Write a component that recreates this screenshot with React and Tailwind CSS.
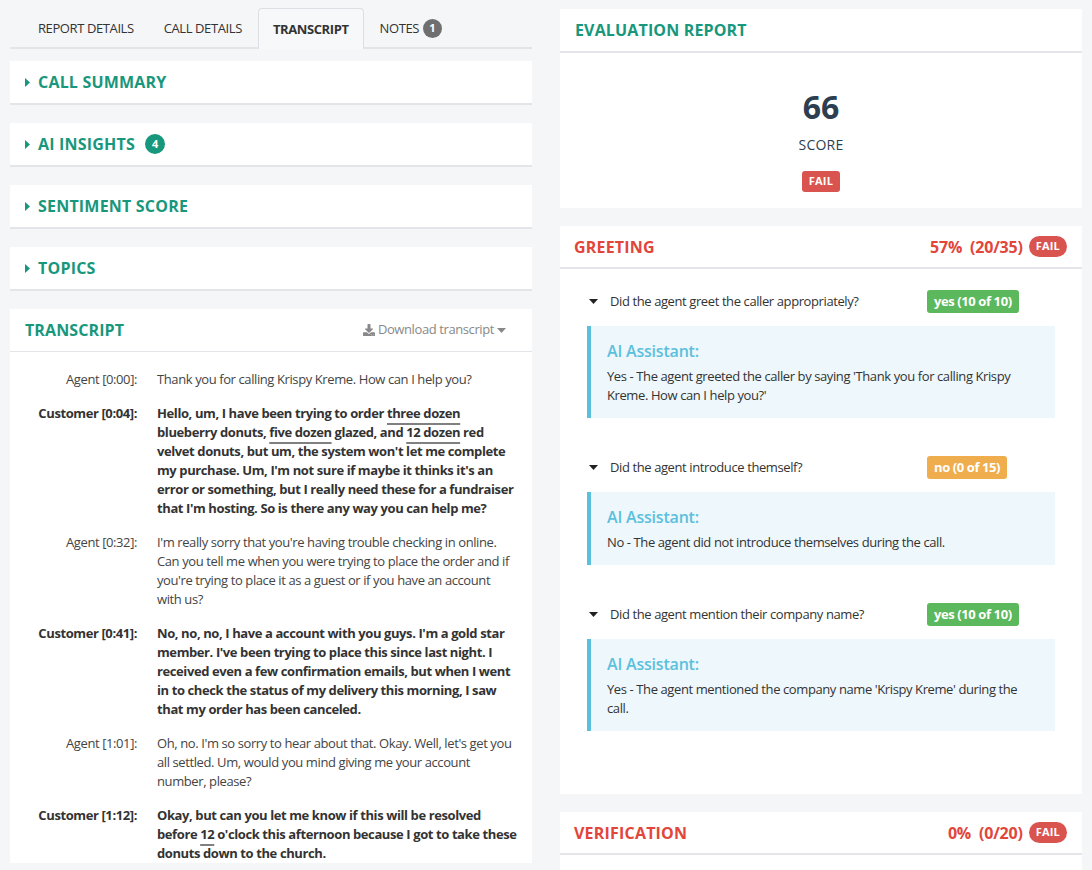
import { FaDownload } from "react-icons/fa";

const teal = "text-[#17977c]";

function CaretRight() {
  return (
    <svg width="5" height="9" viewBox="0 0 5 9" className="shrink-0">
      <path d="M0 0 L5 4.5 L0 9 Z" fill="#17977c" />
    </svg>
  );
}

function CaretDown({ color = "#222" }) {
  return (
    <svg width="9" height="5" viewBox="0 0 9 5" className="shrink-0">
      <path d="M0 0 L9 0 L4.5 5 Z" fill={color} />
    </svg>
  );
}

function Collapsed({ title, badge }) {
  return (
    <div className="bg-white border-b-2 border-[#e3e5e9] h-[44px] flex items-center pl-[15px] gap-[8px]">
      <CaretRight />
      <span className={`${teal} text-[16px] font-bold tracking-[0.2px]`}>{title}</span>
      {badge && (
        <span className="ml-[2px] w-[20px] h-[20px] rounded-full bg-[#17977c] text-white text-[11px] font-bold flex items-center justify-center">
          {badge}
        </span>
      )}
    </div>
  );
}

function U({ children }) {
  return <span className="underline decoration-2 decoration-[#808080] underline-offset-[5px]">{children}</span>;
}

const transcript = [
  { who: "Agent [0:00]:", text: "Thank you for calling Krispy Kreme. How can I help you?" },
  {
    who: "Customer [0:04]:",
    bold: true,
    text: (
      <>
        Hello, um, I have been trying to order <U>three dozen</U> blueberry donuts, <U>five dozen</U> glazed, and{" "}
        <U>12 dozen</U> red velvet donuts, but um, the system won't let me complete my purchase. Um, I'm not sure if
        maybe it thinks it's an error or something, but I really need these for a fundraiser that I'm hosting. So is
        there any way you can help me?
      </>
    ),
  },
  {
    who: "Agent [0:32]:",
    text: "I'm really sorry that you're having trouble checking in online. Can you tell me when you were trying to place the order and if you're trying to place it as a guest or if you have an account with us?",
  },
  {
    who: "Customer [0:41]:",
    bold: true,
    text: "No, no, no, I have a account with you guys. I'm a gold star member. I've been trying to place this since last night. I received even a few confirmation emails, but when I went in to check the status of my delivery this morning, I saw that my order has been canceled.",
  },
  {
    who: "Agent [1:01]:",
    text: "Oh, no. I'm so sorry to hear about that. Okay. Well, let's get you all settled. Um, would you mind giving me your account number, please?",
  },
  {
    who: "Customer [1:12]:",
    bold: true,
    text: (
      <>
        Okay, but can you let me know if this will be resolved before <U>12</U> o'clock this afternoon because I got to
        take these donuts down to the church.
      </>
    ),
  },
];

function FailPill() {
  return (
    <span className="bg-[#d9534f] text-white text-[11px] font-bold rounded-full h-[21px] px-[7px] flex items-center tracking-[0.2px]">
      FAIL
    </span>
  );
}

function SectionHeader({ title, score }) {
  return (
    <div className="h-[43px] border-b-2 border-[#e3e5e9] flex items-center justify-between pl-[14px] pr-[15px]">
      <span className="text-[#e2453a] text-[16px] font-bold tracking-[0.2px]">{title}</span>
      <div className="flex items-center gap-[6px]">
        <span className="text-[#e2453a] text-[16px] font-bold whitespace-pre tracking-[-0.2px]">{score}</span>
        <FailPill />
      </div>
    </div>
  );
}

const questions = [
  {
    q: "Did the agent greet the caller appropriately?",
    badge: "yes (10 of 10)",
    color: "bg-[#5cb85c]",
    ans: "Yes - The agent greeted the caller by saying 'Thank you for calling Krispy Kreme. How can I help you?'",
  },
  {
    q: "Did the agent introduce themself?",
    badge: "no (0 of 15)",
    color: "bg-[#f0ad4e]",
    ans: "No - The agent did not introduce themselves during the call.",
  },
  {
    q: "Did the agent mention their company name?",
    badge: "yes (10 of 10)",
    color: "bg-[#5cb85c]",
    ans: "Yes - The agent mentioned the company name 'Krispy Kreme' during the call.",
  },
];

export default function App() {
  return (
    <main className="bg-[#f5f6f8] w-[1092px] h-[870px] overflow-hidden flex gap-[28px] px-[10px] font-['Open_Sans',sans-serif] text-[#333] tracking-[-0.4px]">
      {/* left column */}
      <div className="w-[522px] flex flex-col">
        {/* tabs */}
        <div className="flex items-end gap-[2px] pl-[14px] pt-[8px] border-b-2 border-[#e3e5e9] text-[13px]">
          <div className="h-[39px] pt-[2px] px-[14px] flex items-center">REPORT DETAILS</div>
          <div className="h-[39px] pt-[2px] px-[14px] flex items-center">CALL DETAILS</div>
          <div className="h-[41px] pt-[2px] -mb-[2px] px-[14px] flex items-center font-bold border border-b-0 border-[#dcdfe3] rounded-t-[4px] bg-[#f7f8fa]">
            TRANSCRIPT
          </div>
          <div className="h-[39px] pt-[2px] px-[14px] flex items-center gap-[4px]">
            NOTES
            <span className="w-[19px] h-[19px] rounded-full bg-[#6f6f6f] text-white text-[11px] font-bold flex items-center justify-center tracking-normal">
              1
            </span>
          </div>
        </div>

        <div className="flex flex-col gap-[18px] mt-[12px]">
          <Collapsed title="CALL SUMMARY" />
          <Collapsed title="AI INSIGHTS" badge="4" />
          <Collapsed title="SENTIMENT SCORE" />
          <Collapsed title="TOPICS" />

          {/* transcript */}
          <div className="bg-white">
            <div className="h-[43px] border-b border-[#e3e5e9] flex items-center justify-between pl-[15px] pr-[26px]">
              <span className={`${teal} text-[16px] font-bold tracking-[0.1px]`}>TRANSCRIPT</span>
              <span className="text-[13px] text-[#888] flex items-center gap-[3px]">
                <FaDownload className="text-[12px] text-[#888]" />
                Download transcript
                <CaretDown color="#888" />
              </span>
            </div>
            <div className="pt-[18px] pr-[15px] flex flex-col gap-[15px] text-[13px] leading-[19px]">
              {transcript.map((r, i) => (
                <div key={i} className="flex gap-[20px]">
                  <div className={`w-[127px] shrink-0 text-right ${r.bold ? "font-bold text-[#333]" : "text-[#444]"}`}>
                    {r.who}
                  </div>
                  <div className={r.bold ? "font-bold text-[#333]" : "text-[#444]"}>{r.text}</div>
                </div>
              ))}
            </div>
          </div>
        </div>
      </div>

      {/* right column */}
      <div className="w-[522px] flex flex-col gap-[18px] pt-[9px]">
        <div className="bg-white">
          <div className="h-[44px] border-b-2 border-[#e3e5e9] flex items-center pl-[15px]">
            <span className={`${teal} text-[16px] font-bold tracking-[0.15px]`}>EVALUATION REPORT</span>
          </div>
          <div className="h-[155px] flex flex-col items-center pt-[34px]">
            <div className="text-[32px] font-bold text-[#2c3e50] leading-[40px] tracking-normal">66</div>
            <div className="text-[14px] text-[#2c3e50] mt-[7px] tracking-[0.2px]">SCORE</div>
            <span className="mt-[16px] bg-[#d9534f] text-white text-[11px] font-bold rounded-[3px] h-[21px] px-[7px] flex items-center tracking-[0.2px]">
              FAIL
            </span>
          </div>
        </div>

        <div className="bg-white">
          <SectionHeader title="GREETING" score="57%  (20/35)" />
          <div className="pt-[21px] pb-[63px] px-[27px] flex flex-col gap-[38px]">
            {questions.map((q, i) => (
              <div key={i} className="flex flex-col gap-[13px]">
                <div className="flex items-center h-[23px]">
                  <div className="w-[340px] flex items-center gap-[12px] pl-[2px] text-[13px] text-[#333]">
                    <CaretDown />
                    {q.q}
                  </div>
                  <span className={`${q.color} text-white text-[13px] font-bold rounded-[3px] h-[23px] px-[7px] flex items-center`}>
                    {q.badge}
                  </span>
                </div>
                <div className="bg-[#eef7fb] border-l-4 border-[#5bc0de] pl-[16px] pr-[20px] pt-[13px] pb-[13px]">
                  <div className="text-[#5bc0de] text-[16px] font-semibold leading-[24px] tracking-[-0.2px]">AI Assistant:</div>
                  <div className="text-[13px] leading-[19px] text-[#333] mt-[4px]">{q.ans}</div>
                </div>
              </div>
            ))}
          </div>
        </div>

        <div className="bg-white flex-1">
          <SectionHeader title="VERIFICATION" score="0%  (0/20)" />
        </div>
      </div>
    </main>
  );
}
